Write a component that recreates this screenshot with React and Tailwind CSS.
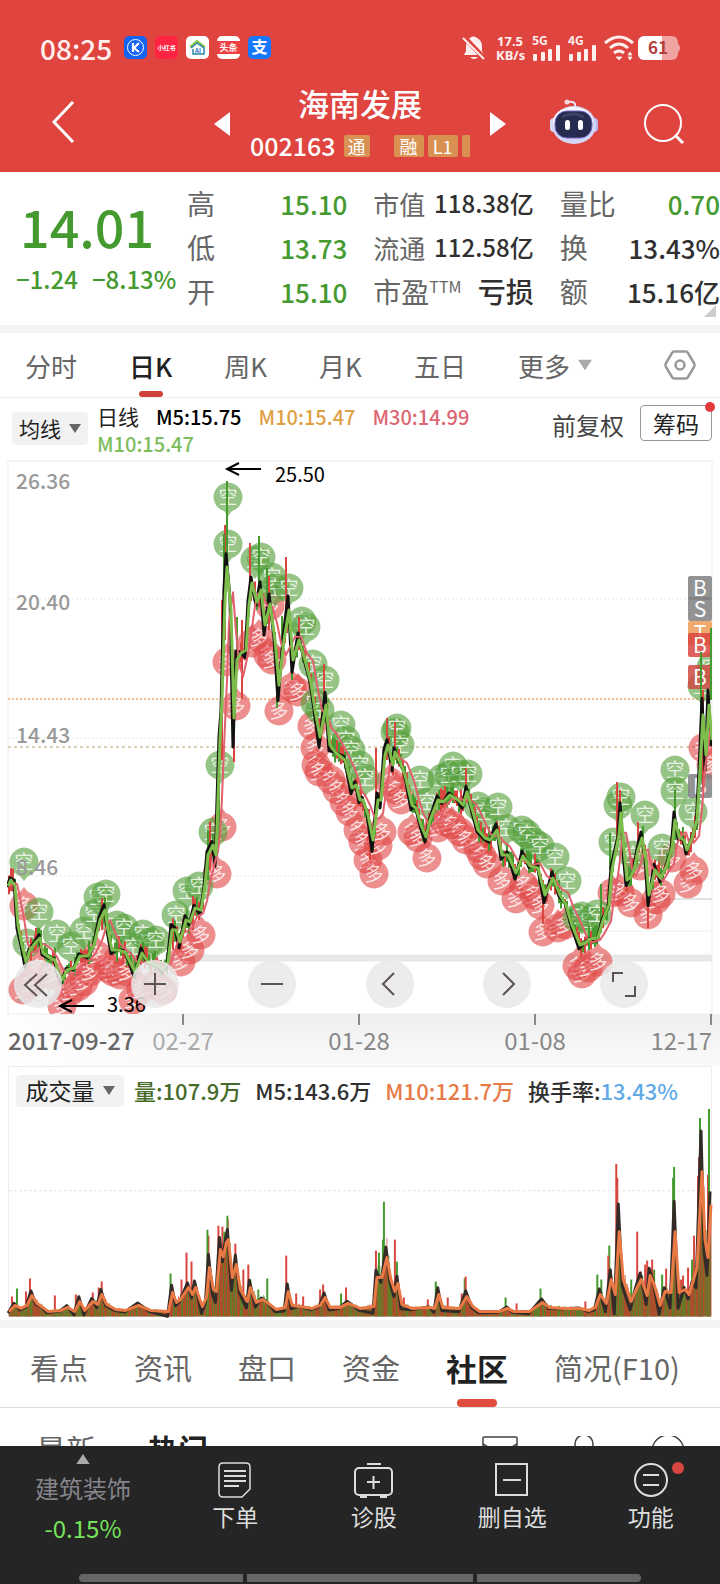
import React from 'react';

const UP = '#d9453f';
const DOWN = '#459a2f';

const quoteTabs = ['分时', '日K', '周K', '月K', '五日'];
const infoTabs = ['看点', '资讯', '盘口', '资金', '社区', '简况(F10)'];

// close price line, [x, y]
const price = [
    [8, 886], [11, 880], [15, 886], [18, 925], [22, 945], [26, 962], [30, 950], [36, 942], [40, 938], [43, 953], [50, 958], [55, 960],
    [58, 972], [62, 980], [67, 970], [74, 968], [80, 956], [88, 956], [94, 945], [100, 920], [105, 910], [108, 930], [112, 950],
    [118, 950], [125, 952], [130, 962], [135, 972], [142, 953], [148, 962], [155, 964], [163, 970], [168, 962], [172, 930], [176, 930],
    [180, 942], [186, 920], [190, 922], [195, 908], [201, 910], [205, 885], [208, 855], [213, 845], [216, 855], [218, 800], [220, 740],
    [222, 700], [225, 600], [227, 567], [231, 610], [234, 718], [237, 660], [241, 653], [246, 650], [249, 605], [252, 583], [255, 595],
    [257, 602], [261, 590], [265, 625], [270, 604], [275, 640], [279, 685], [284, 640], [289, 610], [293, 660], [299, 640], [305, 660],
    [311, 683], [315, 710], [320, 737], [326, 705], [330, 745], [335, 752], [345, 760], [352, 788], [356, 785], [360, 800], [363, 800],
    [368, 815], [373, 840], [378, 800], [381, 800], [385, 755], [388, 745], [393, 765], [395, 752], [400, 762], [405, 775], [412, 805],
    [416, 808], [421, 825], [426, 837], [430, 820], [438, 800], [443, 802], [450, 795], [458, 800], [463, 805], [467, 792], [473, 812],
    [478, 830], [485, 838], [490, 840], [497, 830], [502, 855], [508, 855], [516, 873], [523, 856], [530, 866], [538, 868], [545, 895],
    [553, 878], [560, 895], [566, 905], [572, 925], [580, 945], [585, 943], [590, 939], [598, 938], [603, 920], [609, 905], [612, 870],
    [616, 850], [619, 835], [621, 813], [624, 850], [627, 880], [630, 878], [634, 870], [638, 850], [642, 838], [646, 860], [649, 895],
    [655, 870], [661, 878], [667, 865], [672, 848], [675, 820], [679, 837], [684, 840], [687, 850], [692, 838], [697, 820], [700, 770],
    [703, 715], [706, 755], [709, 705], [712, 740],
];

// long wicks, [x, top, bottom, colour]
const wicks = [
    [227, 481, 567, DOWN], [225, 525, 640, UP], [224, 534, 600, DOWN], [250, 543, 600, UP], [259, 536, 590, DOWN], [286, 557, 620, UP],
    [267, 568, 620, DOWN], [269, 576, 630, UP], [324, 664, 700, UP], [282, 616, 650, DOWN], [299, 617, 650, UP], [237, 617, 660, DOWN],
    [242, 620, 699, UP], [234, 700, 762, UP], [277, 650, 708, DOWN], [292, 640, 680, DOWN], [387, 718, 760, UP], [395, 722, 760, UP],
    [376, 748, 800, UP], [466, 768, 800, UP], [36, 928, 950, UP], [102, 898, 930, UP], [617, 782, 850, UP], [620, 790, 830, UP],
    [610, 833, 870, DOWN], [638, 822, 850, UP], [643, 826, 850, DOWN], [648, 880, 928, UP], [675, 790, 840, DOWN], [543, 880, 924, UP],
    [370, 820, 860, UP], [539, 860, 885, DOWN], [701, 652, 780, DOWN], [711, 628, 700, DOWN], [703, 690, 790, UP], [208, 830, 880, DOWN],
    [210, 822, 870, UP], [219, 740, 840, DOWN], [222, 600, 760, UP], [173, 920, 950, UP], [193, 896, 930, UP], [601, 884, 925, DOWN],
];

const shorts = [
    [24, 862], [228, 497], [228, 544], [255, 560], [261, 557], [272, 577], [275, 588], [289, 588], [302, 621], [306, 627], [313, 664],
    [325, 680], [315, 703], [320, 710], [341, 725], [346, 740], [351, 750], [360, 765], [365, 778], [220, 765], [213, 832], [39, 912],
    [27, 943], [57, 934], [71, 946], [84, 931], [94, 914], [98, 897], [106, 894], [117, 925], [124, 928], [143, 934], [133, 947],
    [150, 942], [156, 940], [187, 891], [199, 886], [176, 915], [395, 732], [397, 728], [400, 745], [420, 780], [427, 802], [442, 778],
    [453, 766], [449, 775], [460, 774], [468, 774], [478, 806], [484, 812], [498, 807], [506, 828], [522, 830], [527, 834], [534, 842],
    [540, 846], [555, 857], [567, 881], [577, 918], [582, 916], [590, 920], [597, 914], [613, 842], [618, 805], [621, 797], [633, 855],
    [645, 815], [662, 848], [675, 770], [675, 791], [693, 812], [702, 686], [711, 667],
];

const longs = [
    [24, 906], [23, 990], [30, 984], [38, 968], [62, 1006], [50, 975], [70, 992], [78, 987], [84, 982], [90, 972], [97, 955], [108, 968],
    [113, 972], [120, 975], [127, 972], [133, 1000], [141, 990], [155, 985], [163, 990], [181, 962], [190, 950], [201, 935], [217, 874],
    [222, 827], [227, 662], [236, 706], [252, 643], [259, 638], [268, 655], [272, 660], [270, 606], [279, 711], [292, 688], [298, 692],
    [312, 726], [315, 748], [316, 765], [319, 772], [331, 780], [337, 790], [344, 802], [350, 812], [358, 830], [363, 842], [368, 860],
    [374, 874], [378, 846], [382, 832], [390, 782], [396, 790], [401, 800], [412, 832], [418, 838], [427, 858], [438, 828], [445, 822],
    [452, 825], [460, 832], [466, 840], [478, 848], [482, 856], [487, 864], [502, 881], [516, 899], [524, 885], [534, 895], [540, 905],
    [543, 932], [558, 928], [565, 925], [577, 966], [582, 974], [588, 968], [598, 962], [612, 893], [620, 892], [631, 903], [640, 866],
    [648, 915], [656, 900], [661, 894], [672, 858], [688, 884], [694, 871], [703, 748], [711, 765],
];

const volumeLine = [
    [8, 1312], [14, 1306], [20, 1309], [26, 1306], [31, 1296], [36, 1304], [42, 1308], [47, 1312], [60, 1311], [67, 1308], [74, 1312],
    [79, 1302], [84, 1311], [92, 1302], [97, 1305], [101, 1295], [106, 1305], [115, 1310], [125, 1311], [138, 1306], [150, 1311],
    [168, 1312], [172, 1293], [176, 1303], [180, 1300], [188, 1288], [192, 1295], [195, 1288], [202, 1307], [206, 1298], [209, 1268],
    [213, 1290], [216, 1292], [220, 1250], [223, 1257], [226, 1243], [228, 1240], [232, 1278], [236, 1265], [240, 1290], [247, 1302],
    [250, 1288], [256, 1303], [262, 1300], [267, 1303], [276, 1310], [285, 1308], [288, 1292], [292, 1306], [300, 1307], [312, 1309],
    [320, 1306], [325, 1298], [330, 1308], [340, 1308], [348, 1304], [360, 1309], [374, 1307], [377, 1278], [382, 1278], [387, 1258],
    [391, 1280], [395, 1292], [398, 1284], [402, 1305], [412, 1309], [430, 1308], [435, 1309], [439, 1295], [443, 1308], [460, 1309],
    [467, 1297], [473, 1307], [480, 1312], [500, 1312], [508, 1309], [514, 1312], [530, 1312], [543, 1303], [550, 1308], [565, 1309],
    [580, 1309], [590, 1311], [596, 1308], [601, 1295], [607, 1304], [612, 1280], [616, 1295], [620, 1232], [624, 1280], [632, 1302],
    [637, 1290], [642, 1280], [648, 1296], [651, 1276], [655, 1285], [661, 1306], [666, 1292], [672, 1293], [676, 1232], [680, 1293],
    [686, 1290], [690, 1295], [694, 1282], [698, 1268], [703, 1172], [706, 1240], [709, 1258], [712, 1205],
];

const volumePeaks = [
    [11, 1297, UP], [16, 1289, DOWN], [25, 1292, UP], [29, 1279, UP], [54, 1296, UP], [75, 1295, UP], [92, 1293, UP], [98, 1288, UP],
    [101, 1282, UP], [170, 1274, DOWN], [181, 1280, UP], [186, 1253, UP], [191, 1262, UP], [208, 1236, UP], [207, 1230, DOWN],
    [218, 1226, UP], [222, 1227, UP], [224, 1232, DOWN], [227, 1216, DOWN], [235, 1244, UP], [243, 1270, UP], [248, 1265, UP],
    [250, 1280, DOWN], [258, 1290, DOWN], [267, 1279, DOWN], [286, 1256, UP], [296, 1294, UP], [303, 1297, UP], [320, 1290, UP],
    [323, 1285, UP], [341, 1294, DOWN], [346, 1288, UP], [376, 1251, UP], [379, 1253, DOWN], [383, 1240, DOWN], [384, 1202, DOWN],
    [395, 1240, UP], [397, 1262, DOWN], [404, 1298, UP], [428, 1300, UP], [436, 1282, DOWN], [448, 1298, UP], [462, 1294, UP],
    [465, 1279, DOWN], [466, 1277, UP], [506, 1298, DOWN], [517, 1304, UP], [541, 1289, DOWN], [586, 1302, UP], [598, 1275, DOWN],
    [602, 1280, DOWN], [610, 1246, DOWN], [609, 1256, UP], [617, 1164, UP], [618, 1178, UP], [632, 1280, DOWN], [638, 1232, UP],
    [643, 1276, DOWN], [646, 1265, UP], [648, 1261, UP], [653, 1260, UP], [655, 1270, DOWN], [663, 1275, DOWN], [667, 1269, UP],
    [674, 1178, DOWN], [675, 1167, DOWN], [682, 1280, UP], [684, 1276, UP], [689, 1268, UP], [693, 1260, DOWN], [695, 1236, UP],
    [699, 1176, UP], [700, 1157, UP], [701, 1118, DOWN], [703, 1155, UP], [709, 1175, UP], [710, 1109, DOWN],
];

const zoomButtons = [
    { label: '最左', d: 'M23 14 11 25 23 36M33 14 21 25 33 36' },
    { label: '放大', d: 'M13 24H35M24 13V35' },
    { label: '缩小', d: 'M13 24H35' },
    { label: '左移', d: 'M28 13 17 24 28 35' },
    { label: '右移', d: 'M20 13 31 24 20 35' },
    { label: '全屏', d: 'M23 13H13V22M35 26V36H25' },
];

function noise(n) {
    const v = Math.sin(n * 12.9898) * 43758.5453;
    return v - Math.floor(v);
}

function valueAt(points, x) {
    for (let i = 1; i < points.length; i++) {
        if (x <= points[i][0]) {
            const [x0, y0] = points[i - 1];
            const [x1, y1] = points[i];
            return y0 + ((y1 - y0) * (x - x0)) / (x1 - x0);
        }
    }
    return points[points.length - 1][1];
}

function line(points) {
    return 'M' + points.map((p) => p.join(' ')).join('L');
}

function average(points, size) {
    return points.map((p, i) => {
        const part = points.slice(Math.max(0, i - size + 1), i + 1);
        return [p[0] + 2, part.reduce((sum, q) => sum + q[1], 0) / part.length];
    });
}

// the faster average swings further out at every turn
function faster(points, by) {
    return points.map((p, i) => {
        const a = points[Math.max(0, i - 1)];
        const b = points[Math.min(points.length - 1, i + 1)];
        return [p[0] - 1, p[1] + (p[1] - (a[1] + b[1]) / 2) * by];
    });
}

function candles() {
    let up = '';
    let down = '';
    for (let x = 9; x < 712; x += 2) {
        const y = valueAt(price, x);
        const stick = `M${x} ${(y - 2 - noise(x) * 12).toFixed(1)}V${(y + 2 + noise(x + 5) * 10).toFixed(1)}`;
        if (noise(x + 9) > 0.5) up += stick;
        else down += stick;
    }
    return { up, down };
}

function volumes() {
    let up = '';
    let down = '';
    for (let x = 8; x < 713; x += 1) {
        const h = 1316 - valueAt(volumeLine, x);
        const bar = `M${x} 1317V${(1316 - h * (0.85 + noise(x) * 0.5)).toFixed(1)}`;
        if (noise(x + 3) > 0.45) up += bar;
        else down += bar;
    }
    return { up, down };
}

function Triangle({ className }) {
    return <svg viewBox="0 0 12 9" className={className} fill="currentColor"><path d="M0 0H12L6 9Z" /></svg>;
}

function Pin({ x, y, text, color, flip }) {
    const round = flip
        ? `M${x - 4} ${y - 14}L${x} ${y - 19}L${x + 4} ${y - 14}A14.5 14.5 0 1 1 ${x - 4} ${y - 14}Z`
        : `M${x - 4} ${y + 14}L${x} ${y + 19}L${x + 4} ${y + 14}A14.5 14.5 0 1 0 ${x - 4} ${y + 14}Z`;
    return (
        <g>
            <path d={round} fill={color} fillOpacity="0.62" />
            <text x={x} y={y + 7} textAnchor="middle" fontSize="19" fill="#fff" fillOpacity="0.8">{text}</text>
        </g>
    );
}

function Flag({ y, color, text }) {
    return (
        <g>
            <rect x="688" y={y} width="24" height="24" rx="2" fill={color} fillOpacity="0.85" />
            <text x="700" y={y + 20} textAnchor="middle" fontSize="21" fill="#fff">{text}</text>
        </g>
    );
}

function StatusBar() {
    return (
        <div className="flex items-center h-8 pl-10 pr-10 text-[#fff0ef]">
            <span className="text-[28px] leading-8 font-medium">08:25</span>
            <div className="flex gap-[7px] ml-3">
                <svg viewBox="0 0 24 24" className="w-6 h-6"><rect width="23" height="23" rx="5" fill="#1463f3" /><circle cx="11.500" cy="11.500" r="8" fill="none" stroke="#fff" /><path d="M9 7v9M15 7l-5 5 5 4" fill="none" stroke="#fff" strokeWidth="2.200" /></svg>
                <svg viewBox="0 0 24 24" className="w-6 h-6"><rect width="23" height="23" rx="5" fill="#ff2442" /><text x="11.500" y="14" textAnchor="middle" fontSize="6" fontWeight="700" fill="#fff">小红书</text></svg>
                <svg viewBox="0 0 24 24" className="w-6 h-6">
                    <rect width="23" height="23" rx="5" fill="#fff" />
                    <path d="M4 11 11 5l8 6" fill="none" stroke="#8cc63f" strokeWidth="2" />
                    <path d="M5 12l6-5 7 5v6H7v-5" fill="none" stroke="#2787a8" strokeWidth="1.500" />
                    <text x="12" y="16.500" textAnchor="middle" fontSize="6" fontWeight="700" fill="#2878c8">AI</text>
                </svg>
                <svg viewBox="0 0 24 24" className="w-6 h-6"><rect width="23" height="23" rx="5" fill="#fff" /><path d="M0 5H23V18H0Z" fill="#f04142" /><text x="11.500" y="15" textAnchor="middle" fontSize="9" fontWeight="700" fill="#fff">头条</text></svg>
                <svg viewBox="0 0 24 24" className="w-6 h-6 overflow-visible"><rect width="23" height="23" rx="5" fill="#1677ff" /><text x="11.500" y="17" textAnchor="middle" fontSize="16" fontWeight="700" fill="#fff">支</text></svg>
            </div>
            <svg viewBox="0 0 24 26" className="w-6 h-[26px] ml-auto" fill="currentColor">
                <path d="M8 3a5 5 0 0 1 7 0c4 2 5 5 5 9v4l2 4H2l2-4v-4c0-4 1-7 4-9ZM8 22h8q-4 4-8 0Z" />
                <path d="M1 1 23 24" stroke="#df443f" strokeWidth="5" />
                <path d="M1 3 22 24" stroke="currentColor" strokeWidth="2" />
            </svg>
            <div className="ml-[10px] w-7 text-center text-[13px] leading-[14px] font-bold font-['Noto_Sans']">17.5<br />KB/s</div>
            {['5G', '4G'].map((net) => (
                <svg key={net} viewBox="0 0 28 26" className="w-7 h-[26px] ml-2 overflow-visible" fill="currentColor">
                    <text x="0" y="10" fontSize="12" fontWeight="700">{net}</text>
                    <rect x="1" y="19" width="4" height="7" rx="1" /><rect x="9" y="17" width="4" height="9" rx="1" />
                    <rect x="16" y="14" width="4" height="12" rx="1" /><rect x="24" y="10" width="4" height="16" rx="1" />
                </svg>
            ))}
            <svg viewBox="0 0 30 26" className="w-[30px] h-[26px] ml-2" fill="none" stroke="currentColor" strokeWidth="3">
                <path d="M1 8q14-12 28 0M6 13q9-8 18 0M10 18q5-4 10 0" />
                <path d="M12 22h6l-3 3ZM24 20h4l-2-3ZM24 22h4l-2 3Z" fill="currentColor" strokeWidth="0.800" />
            </svg>
            <svg viewBox="0 0 42 24" className="w-[42px] h-6 ml-1">
                <path d="M6 0H34a6 6 0 0 1 6 6V18a6 6 0 0 1-6 6H24V0ZM40 8q2 1 2 4t-2 4Z" fill="#f0a3a1" />
                <path d="M24 0V24H6a6 6 0 0 1-6-6V6A6 6 0 0 1 6 0Z" fill="#fff" />
                <text x="20" y="18" textAnchor="middle" fontSize="17" fontWeight="700" fill="#b5403b">61</text>
            </svg>
        </div>
    );
}

function Header() {
    return (
        <header className="bg-[#df443f] h-[172px] shrink-0 pt-8 text-white">
            <StatusBar />
            <div className="flex items-center h-[92px] mt-4 pl-[51px] pr-9">
                <button aria-label="返回" className="mb-2"><svg viewBox="0 0 24 42" className="w-6 h-[42px]" fill="none" stroke="currentColor" strokeWidth="3"><path d="M22 1 3 21 22 41" /></svg></button>
                <div className="flex items-center gap-5 ml-auto mr-[43px]">
                    <button aria-label="上一只" className="mb-1"><svg viewBox="0 0 16 24" className="w-4 h-6" fill="currentColor"><path d="M16 0V24L0 12Z" /></svg></button>
                    <div className="w-[220px]">
                        <h1 className="text-center text-[31px] leading-10 font-medium">海南发展</h1>
                        <div className="flex items-center h-[46px] overflow-hidden">
                            <span className="text-[25px] font-medium">002163</span>
                            <span className="ml-2 w-[26px] h-[22px] shrink-0 rounded-xs bg-[#d99152] text-center text-lg leading-[22px]">通</span>
                            <span className="ml-6 w-[30px] h-[22px] shrink-0 rounded-xs bg-[#d99152] text-center text-lg leading-[22px]">融</span>
                            <span className="ml-1 w-[30px] h-[22px] shrink-0 rounded-xs bg-[#d99152] text-center text-lg leading-[22px]">L1</span>
                            <span className="ml-1 w-[30px] h-[22px] shrink-0 rounded-xs bg-[#d99152]"></span>
                        </div>
                    </div>
                    <button aria-label="下一只" className="mb-1"><svg viewBox="0 0 16 24" className="w-4 h-6" fill="currentColor"><path d="M0 0V24L16 12Z" /></svg></button>
                </div>
                <button aria-label="智能助手" className="mb-2">
                    <svg viewBox="0 0 50 46" className="w-[50px] h-[46px]">
                        <path d="M26 8V5q-1-3-7-2" fill="none" stroke="#e8e2f5" strokeWidth="2" />
                        <circle cx="18" cy="3" r="2.500" fill="#f6d6da" />
                        <rect x="1" y="19" width="8" height="14" rx="4" fill="#d9dcf8" />
                        <rect x="41" y="19" width="8" height="14" rx="4" fill="#b9b8f0" />
                        <ellipse cx="25" cy="26" rx="22" ry="19" fill="#d5d6f5" />
                        <ellipse cx="24" cy="23" rx="20" ry="15" fill="#f7f7ff" />
                        <rect x="6" y="12" width="37" height="27" rx="12" fill="#262c4f" stroke="#6d66c8" />
                        <path d="M13 18q11-6 22 0" fill="none" stroke="#3b4266" strokeWidth="3" />
                        <rect x="16" y="21" width="5" height="10" rx="2.500" fill="#fff" />
                        <rect x="29" y="21" width="5" height="10" rx="2.500" fill="#fff" />
                    </svg>
                </button>
                <button aria-label="搜索" className="ml-[45px] mb-1"><svg viewBox="0 0 40 40" className="w-10 h-10" fill="none" stroke="currentColor" strokeWidth="2"><circle cx="19" cy="19" r="18" /><path d="M31 31 39 39" strokeWidth="3" /></svg></button>
            </div>
        </header>
    );
}

function Quote() {
    return (
        <section className="relative flex pt-[9px] pb-3 border-b-8 border-[#f4f4f4] text-[#303030]">
            <div className="w-[187px] shrink-0 text-[#459a2f] font-medium">
                <div className="pl-5 pt-2 text-[52px] leading-[74px]">14.01</div>
                <div className="flex gap-[14px] pl-4 text-2xl leading-8"><span>−1.24</span><span>−8.13%</span></div>
            </div>
            <dl className="grid grid-cols-3 gap-x-[26px] flex-1">
                <div className="text-[28px]">
                    {[['高', '15.10'], ['低', '13.73'], ['开', '15.10']].map(([k, v]) => (
                        <div key={k} className="flex items-center justify-between h-11"><dt className="text-[#666]">{k}</dt><dd className="text-[26px] font-medium text-[#459a2f]">{v}</dd></div>
                    ))}
                </div>
                <div>
                    <div className="flex items-center justify-between h-11"><dt className="text-[26px] text-[#666]">市值</dt><dd className="text-2xl font-medium">118.38亿</dd></div>
                    <div className="flex items-center justify-between h-11"><dt className="text-[26px] text-[#666]">流通</dt><dd className="text-2xl font-medium">112.58亿</dd></div>
                    <div className="flex items-center justify-between h-11"><dt className="flex text-[28px] text-[#666]">市盈<span className="text-base leading-8">TTM</span></dt><dd className="text-[28px] font-medium">亏损</dd></div>
                </div>
                <div>
                    <div className="flex items-center justify-between h-11"><dt className="text-[28px] text-[#666]">量比</dt><dd className="text-[26px] font-medium text-[#459a2f]">0.70</dd></div>
                    <div className="flex items-center justify-between h-11"><dt className="text-[28px] text-[#666]">换</dt><dd className="text-[26px] font-medium">13.43%</dd></div>
                    <div className="flex items-center justify-between h-11"><dt className="text-[28px] text-[#666]">额</dt><dd className="text-[26px] font-medium">15.16亿</dd></div>
                </div>
            </dl>
            <svg viewBox="0 0 12 12" className="absolute right-1 bottom-2 w-3 h-3" fill="#ccc"><path d="M12 0V12H0Z" /></svg>
        </section>
    );
}

function PriceChart() {
    const { up, down } = candles();
    return (
        <div className="relative mx-2 bg-white">
            <svg viewBox="8 460 704 606" className="block w-full h-auto overflow-visible" fill="none">
                <defs>
                    <linearGradient id="axis" x1="0" y1="0" x2="0" y2="1"><stop offset="0" stopColor="#efefef" /><stop offset="1" stopColor="#fafafa" /></linearGradient>
                    <linearGradient id="fade" x1="0" y1="0" x2="1" y2="0"><stop offset="0" stopColor="#fff" /><stop offset="0.300" stopColor="#fff" stopOpacity="0" /></linearGradient>
                    <clipPath id="plot"><rect x="7" y="460" width="705" height="554" /></clipPath>
                </defs>
                <rect x="0" y="1014" width="720" height="52" fill="url(#axis)" />
                <rect x="0" y="1014" width="720" height="52" fill="url(#fade)" />
                <rect x="8" y="461" width="704" height="553" stroke="#ececec" />
                <path d="M165 958H712" stroke="#e8e8e8" strokeWidth="7" />
                <path d="M640 899H712" stroke="#e2e2e2" strokeWidth="2" />
                <path d="M600 931H712" stroke="#eee" />
                <path d="M8 599H712M8 738H712M8 876H712" stroke="#e9e9e9" strokeDasharray="2 2" />
                <path d="M8 699H712" stroke="#eec295" strokeWidth="2" strokeDasharray="2 2" />
                <path d="M8 747H712" stroke="#ddd0b4" strokeWidth="2" strokeDasharray="3 3" />
                <g clipPath="url(#plot)">
                    {longs.map(([x, y]) => <Pin key={x + '-' + y} x={x} y={y} text="多" color="#e04a48" flip />)}
                    {shorts.map(([x, y]) => <Pin key={x + '-' + y} x={x} y={y} text="空" color="#55a03c" />)}
                    <Flag y={576} color="#808080" text="B" />
                    <Flag y={597} color="#808080" text="S" />
                    <Flag y={621} color="#ee9a55" text="T" />
                    <Flag y={633} color="#d9453f" text="B" />
                    <Flag y={665} color="#cf4a42" text="B" />
                    <Flag y={774} color="#808080" text="B" />
                    <path d={up} stroke={UP} strokeWidth="2" />
                    <path d={down} stroke={DOWN} strokeWidth="2" />
                    {wicks.map(([x, a, b, c]) => <path key={x} d={`M${x} ${a}V${b}`} stroke={c} strokeWidth="2" />)}
                    <g strokeLinejoin="round">
                        <path d={line(faster(price, 0.35))} stroke="#111" strokeWidth="3" />
                        <path d={line(average(price, 3))} stroke="#e0606c" strokeWidth="2" />
                        <path d={line(price)} stroke="#7dbd4b" strokeWidth="3" />
                    </g>
                </g>
                <g fontSize="21" fontWeight="500" fill="#999">
                    <text x="16" y="489">26.36</text>
                    <text x="16" y="610">20.40</text>
                    <text x="16" y="743">14.43</text>
                    <text x="16" y="875">8.46</text>
                    <text x="16" y="1002" fillOpacity="0.500">2.50</text>
                </g>
                <path d="M261 469H227M239 463 227 469 239 475M94 1006H60M72 1000 60 1006 72 1012" stroke="#000" strokeWidth="2" />
                <g fontSize="20" fill="#000"><text x="275" y="482">25.50</text><text x="107" y="1012">3.36</text></g>
                <path d="M183 1014V1025M359 1014V1025M535 1014V1025M711 1014V1025" stroke="#888" strokeWidth="2" />
                <g fontSize="24" fill="#888">
                    <text x="8" y="1050" fill="#666" fontWeight="500">2017-09-27</text>
                    <text x="183" y="1050" textAnchor="middle" fill="#aaa">02-27</text>
                    <text x="359" y="1050" textAnchor="middle">01-28</text>
                    <text x="535" y="1050" textAnchor="middle">01-08</text>
                    <text x="712" y="1050" textAnchor="end">12-17</text>
                </g>
            </svg>
            <div className="absolute left-[6px] right-16 bottom-[58px] flex justify-between">
                {zoomButtons.map((b) => (
                    <button key={b.label} aria-label={b.label} className="w-12 h-12 rounded-full bg-[#e9e9e9]/85">
                        <svg viewBox="0 0 48 48" className="w-12 h-12" fill="none" stroke="#5c5453" strokeWidth="2"><path d={b.d} /></svg>
                    </button>
                ))}
            </div>
        </div>
    );
}

function VolumeChart() {
    const { up, down } = volumes();
    return (
        <div className="mx-2 border border-b-0 border-[#ececec]">
            <div className="flex items-center gap-[14px] h-12 pl-[7px] pb-px text-[22px] font-medium whitespace-nowrap">
                <button className="flex items-center justify-center gap-2 w-[108px] h-8 -mr-1 rounded-sm bg-[#f2f2f2] text-[23px] font-normal text-[#222]">成交量<Triangle className="w-3 h-[9px] text-[#666]" /></button>
                <span className="text-[#476b2b]">量:107.9万</span>
                <span className="text-[#303030]">M5:143.6万</span>
                <span className="text-[#e67b48]">M10:121.7万</span>
                <span className="text-[#303030]">换手率:<span className="text-[#62a9e8]">13.43%</span></span>
            </div>
            <svg viewBox="8 1115 704 202" className="block w-full h-auto overflow-visible" fill="none">
                <path d="M8 1191H712" stroke="#e2e2e2" strokeDasharray="3 2" />
                {volumePeaks.map(([x, y, c]) => <path key={x + '-' + y} d={`M${x} 1317V${y}`} stroke={c} strokeWidth="2" />)}
                <path d={`${line(volumeLine)}V1317H8Z`} fill="#86652c" />
                <path d={up} stroke="#c5402e" strokeWidth="1" strokeOpacity="0.7" />
                <path d={down} stroke="#4f8c28" strokeWidth="1" strokeOpacity="0.7" />
                <g strokeLinejoin="round">
                    <path d={line(faster(volumeLine, 0.5))} stroke="#332b28" strokeWidth="3" />
                    <path d={line(volumeLine)} stroke="#ea7a45" strokeWidth="3" />
                </g>
            </svg>
        </div>
    );
}

function Footer() {
    const icon = 'w-9 h-9';
    return (
        <footer className="shrink-0 h-[138px] bg-[#252525] text-[#ddd]">
            <div className="flex h-32">
                <button className="flex flex-col items-center w-[166px] pt-2">
                    <Triangle className="w-4 h-[10px] rotate-180 text-[#aaa]" />
                    <span className="mt-2 text-2xl leading-8 text-[#85848c]">建筑装饰</span>
                    <span className="mt-2 text-2xl leading-8 text-[#76e35a]">-0.15%</span>
                </button>
                <nav className="grid grid-cols-4 flex-1 text-[23px] leading-9">
                    <button className="flex flex-col items-center pt-4">
                        <svg viewBox="0 0 36 36" className={icon} fill="none" stroke="currentColor" strokeWidth="1.500">
                            <path d="M6 1H29q4 0 4 4V27L25 35H6q-4 0-4-4V5q0-4 4-4Z" /><path d="M7 9H29M7 14H29M7 19H29M7 24H22" strokeWidth="2" />
                        </svg>
                        下单
                    </button>
                    <button className="flex flex-col items-center pt-4">
                        <svg viewBox="0 0 40 36" className="w-10 h-9" fill="none" stroke="currentColor" strokeWidth="2">
                            <rect x="1" y="6" width="37" height="27" rx="4" /><path d="M13 2H27M13 20H26M19.500 14V27" /><path d="M6 35H13M26 35H33" />
                        </svg>
                        诊股
                    </button>
                    <button className="flex flex-col items-center pt-4">
                        <svg viewBox="0 0 36 36" className={icon} fill="none" stroke="currentColor" strokeWidth="2"><path d="M2 2H33V33H2ZM9 18H27" /></svg>
                        删自选
                    </button>
                    <button className="relative flex flex-col items-center pt-4">
                        <svg viewBox="0 0 36 36" className={icon} fill="none" stroke="currentColor" strokeWidth="2"><circle cx="18" cy="18" r="16" /><path d="M10 13H26M10 23H26" /></svg>
                        功能
                        <i className="absolute top-4 right-9 w-3 h-3 rounded-full bg-[#d9453f]"></i>
                    </button>
                </nav>
            </div>
            <div className="flex gap-1 px-[79px]">
                <div className="h-2 w-[164px] rounded-l-full bg-[#666]"></div>
                <div className="h-2 flex-1 bg-[#666]"></div>
                <div className="h-2 w-[164px] rounded-r-full bg-[#666]"></div>
            </div>
        </footer>
    );
}

export default function App() {
    return (
        <div className="flex flex-col h-screen overflow-hidden bg-white font-['Noto_Sans_CJK_SC',sans-serif]">
            <Header />
            <main className="flex-1 min-h-0 overflow-hidden">
                <Quote />
                <nav className="flex items-stretch gap-[52px] h-[65px] pl-[25px] pr-6 border-b border-[#eee] text-[26px] text-[#666]">
                    {quoteTabs.map((tab) => (
                        <button key={tab} className={tab === '日K' ? 'relative font-medium text-[#222]' : ''}>
                            {tab}
                            {tab === '日K' && <i className="absolute bottom-0 left-1/2 -translate-x-1/2 w-6 h-[6px] rounded-full bg-[#d0403a]"></i>}
                        </button>
                    ))}
                    <button className="flex items-center gap-2">更多<Triangle className="w-[14px] h-3 text-[#aaa]" /></button>
                    <button aria-label="设置" className="ml-auto">
                        <svg viewBox="0 0 32 30" className="w-8 h-[30px]" fill="none" stroke="#999" strokeWidth="2.500"><path d="M10 1.500H22Q23 1.500 24 3L30 13Q31 15 30 17L24 27Q23 28.500 22 28.500H10Q9 28.500 8 27L2 17Q1 15 2 13L8 3Q9 1.500 10 1.500Z" /><circle cx="16" cy="15" r="4.500" /></svg>
                    </button>
                </nav>
                <div className="flex h-[62px] pl-3 pr-2">
                    <button className="flex items-center justify-center gap-2 w-[76px] h-[33px] mt-[14px] rounded-sm bg-[#f2f2f2] text-[21px] text-[#222] whitespace-nowrap">均线<Triangle className="w-3 h-[9px] shrink-0 text-[#666]" /></button>
                    <div className="flex-1 flex flex-wrap gap-x-[17px] pt-[5px] pl-[9px] text-xl leading-[27px] font-medium content-start">
                        <span className="text-[21px] font-normal text-[#222]">日线</span>
                        <span className="text-black">M5:15.75</span>
                        <span className="text-[#dfa045]">M10:15.47</span>
                        <span className="text-[#dc6672]">M30:14.99</span>
                        <span className="text-[#7dbd5c]">M10:15.47</span>
                    </div>
                    <button className="mr-4 mb-2 text-2xl text-[#444]">前复权</button>
                    <button className="relative w-[72px] h-9 mt-[7px] rounded-sm border border-[#999] text-[23px] leading-8 text-[#222]">
                        筹码
                        <i className="absolute -top-1 -right-1 w-[10px] h-[10px] rounded-full bg-[#e23a3a]"></i>
                    </button>
                </div>
                <PriceChart />
                <VolumeChart />
                <div className="h-2 mt-1 bg-[#f4f4f4]"></div>
                <nav className="flex items-stretch gap-[46px] h-20 pl-[30px] border-b border-[#ddd] text-[29px] text-[#666] whitespace-nowrap">
                    {infoTabs.map((tab) => (
                        <button key={tab} className={tab === '社区' ? 'relative text-[31px] font-bold text-[#222]' : ''}>
                            {tab}
                            {tab === '社区' && <i className="absolute bottom-0 left-1/2 -translate-x-1/2 w-10 h-2 rounded-full bg-[#e24c3f]"></i>}
                        </button>
                    ))}
                </nav>
                <div className="flex items-start gap-[52px] px-9 pt-5 text-[30px] leading-10 text-[#666]">
                    <button>最新</button>
                    <button className="font-bold text-[#222]">热门</button>
                    <svg viewBox="0 0 204 40" className="w-[204px] h-10 ml-auto mt-2" fill="none" stroke="#444" strokeWidth="1.500">
                        <rect x="3" y="1" width="34" height="28" rx="1" /><path d="M3 8 20 18 37 8" />
                        <circle cx="104" cy="8" r="9" /><path d="M88 37q0-19 16-19t16 19" />
                        <circle cx="188" cy="15" r="16" />
                    </svg>
                </div>
            </main>
            <Footer />
        </div>
    );
}
